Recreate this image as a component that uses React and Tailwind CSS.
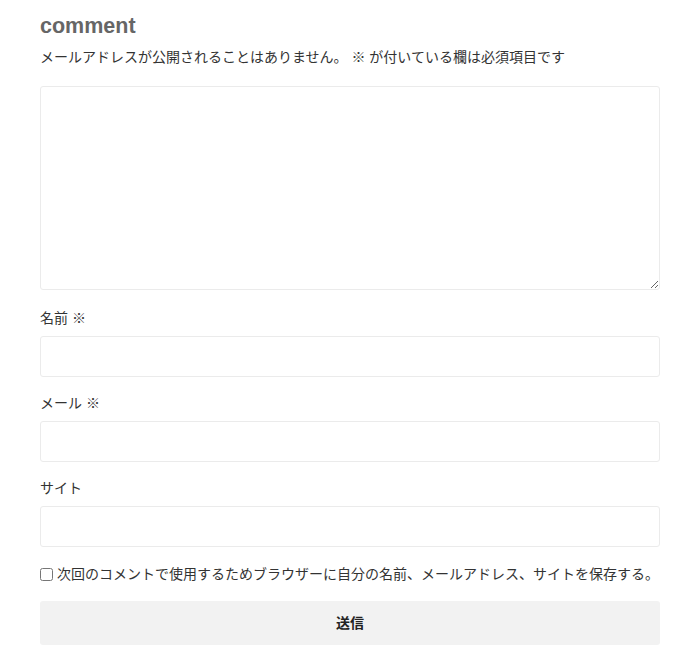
export default function App() {
  const fields = [
    { label: "名前", required: true },
    { label: "メール", required: true },
    { label: "サイト", required: false },
  ];

  return (
    <div
      className="bg-white w-[690px] h-[665px] px-10 pt-[11px] text-[#333] text-[14px]"
      style={{ fontFamily: '"Liberation Sans", "Noto Sans CJK JP", sans-serif' }}
    >
      {/* heading */}
      <h3 className="text-[21.5px] leading-[30px] font-bold text-[#666]">comment</h3>

      <p className="mt-[6px] leading-[21px]">
        メールアドレスが公開されることはありません。 ※ が付いている欄は必須項目です
      </p>

      {/* comment body */}
      <textarea className="block mt-[18px] w-[620px] h-[204px] border border-[#ebebeb] rounded-[3px] bg-white outline-none" />

      {/* name / mail / site */}
      {fields.map((f, i) => (
        <div key={f.label} className={i === 0 ? "mt-[18px]" : "mt-[16px]"}>
          <label className="block leading-[21px]">
            {f.label}
            {f.required && <span> ※</span>}
          </label>
          <input
            type="text"
            className="block mt-[7px] w-[620px] h-[41px] border border-[#ebebeb] rounded-[3px] bg-white outline-none"
          />
        </div>
      ))}

      <label className="mt-[17px] flex items-center leading-[21px] whitespace-nowrap">
        <input type="checkbox" className="w-[13px] h-[13px] m-0 mr-[4px]" />
        次回のコメントで使用するためブラウザーに自分の名前、メールアドレス、サイトを保存する。
      </label>

      <button className="mt-[16px] w-[620px] h-[44px] bg-[#f2f2f2] rounded-[3px] font-bold text-[14px] text-[#222]">
        送信
      </button>
    </div>
  );
}
